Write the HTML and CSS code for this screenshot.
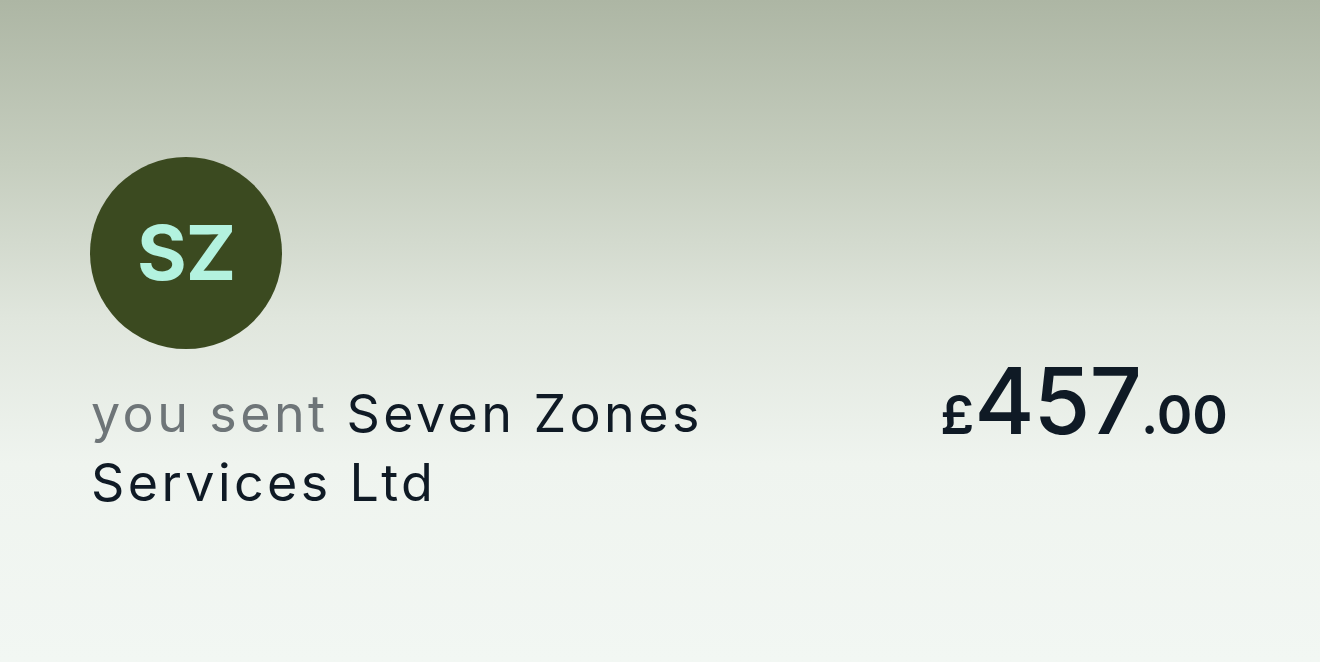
FILE: index.html
```html
<!DOCTYPE html>
<html lang="en">
<head>
<meta charset="utf-8">
<title>Payment</title>
<link rel="stylesheet" href="styles.css">
</head>
<body>
<main class="card">
  <div class="avatar"><span class="initials">SZ</span></div>
  <div class="row">
    <p class="desc"><span class="muted">you sent</span> Seven Zones Services Ltd</p>
    <p class="amount"><span class="cur">£</span><span class="int">457</span><span class="dec">.00</span></p>
  </div>
</main>
</body>
</html>
```
FILE: styles.css
```css
html, body {
  margin: 0;
  height: 100%;
}
body {
  background: linear-gradient(180deg, #adb6a4 0%, #c6cebf 25%, #e0e6dd 48%, #eff4ef 70%, #f2f7f3 100%);
  font-family: Inter, "Noto Sans", sans-serif;
  color: #0f1a25;
}
.card {
  padding: 157px 92px 0 90px;
  display: flex;
  flex-direction: column;
  gap: 30px;
}
.avatar {
  width: 192px;
  height: 192px;
  border-radius: 50%;
  background: #3b4a20;
  display: flex;
  align-items: center;
  justify-content: center;
}
.initials {
  color: #b3f2df;
  font-weight: 700;
  font-size: 76px;
  letter-spacing: -1px;
  line-height: 1;
  margin-top: -2px;
}
.row {
  display: flex;
  justify-content: space-between;
  align-items: flex-start;
}
.desc {
  margin: 0;
  max-width: 680px;
  font-size: 52px;
  line-height: 69px;
  letter-spacing: 3.4px;
  padding-left: 1px;
}
.muted {
  color: #6e7578;
}
.amount {
  margin: -24px 0 0;
  white-space: nowrap;
  line-height: 1;
}
.cur {
  font-size: 54px;
  font-weight: 600;
}
.int {
  font-size: 92px;
  font-weight: 500;
  letter-spacing: -1px;
}
.dec {
  font-size: 54px;
  font-weight: 600;
}
```
